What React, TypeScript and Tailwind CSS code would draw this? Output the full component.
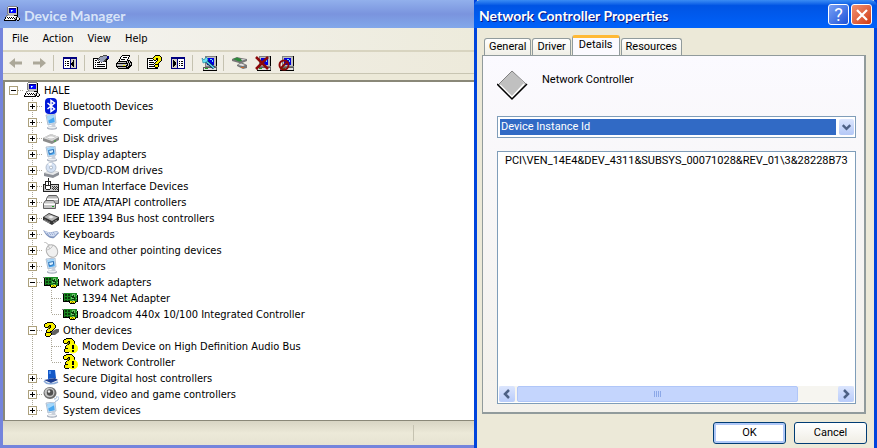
import { useState, type ReactNode } from "react";

const PALETTE: Record<string, string> = {
  k: "#000000",
  w: "#ffffff",
  g: "#c0c0c0",
  d: "#808080",
  b: "#0000ff",
  n: "#000080",
  c: "#66ddff",
  y: "#f8f000",
  o: "#808000",
  e: "#4a4a4a",
  s: "#98a0b8",
  D: "#0a3a0a",
  G: "#1c8a24",
  L: "#68c468",
};

// Small bitmap icons: one letter per pixel, "." is transparent
function Pixels({ rows }: { rows: string[] }) {
  return (
    <g shapeRendering="crispEdges">
      {rows.flatMap((row, y) =>
        [...row].map((ch, x) =>
          PALETTE[ch] ? (
            <rect key={`${x}-${y}`} x={x} y={y} width="1" height="1" fill={PALETTE[ch]} />
          ) : null
        )
      )}
    </g>
  );
}

const PC = [
  "....ddddddddd...",
  "...dwwwwwwwwgk..",
  "...dgnnnnnnngk..",
  "...dgnbbbbbbgk..",
  "...dgnbwcbbbgk..",
  "...dgnbcbbbbgk..",
  "...dgnbbbbbbgk..",
  "...dgggggggggk..",
  "....dggggggggk..",
  "..ddggggggkkkk..",
  "..dwwwwwwwwwgk..",
  ".kwkwkwkwkwgkgd.",
  ".kwwkwkwkwkgkwwk",
  "kwwwwwwwwwgkkwgk",
  "kkkkkkkkkkkk.kk.",
];

const PROPS = [
  "..........eeee..",
  ".......eeessssnn",
  "......esssssssnn",
  "kkkkkesssssssenn",
  "kwwwesesssssekk.",
  "kwkkwewsssseek..",
  "kwwwwwessseekk..",
  "kwkwkkkwewwwwk..",
  "kwwwwwwwwwwwwk..",
  "kwkwkkkkkkkkwk..",
  "kwwwwwwwwwwwwk..",
  "kwkwkkkkkkkkwk..",
  "kwwwwwwwwwwwwk..",
  "kkkkkkkkkkkkkk..",
];

const PRINTER = [
  "......kkkkkkkk..",
  ".....kwwwwwwwk..",
  "....kwwkkkkwk...",
  "....kwwwwwwwk...",
  "...kwkkkkwwk....",
  "...kwwwwwwwkkk..",
  "..kkkkkkkkkgkgk.",
  ".kggggggggkgkgkk",
  "kkkkkkkkkkkkgkgk",
  "kggggggggggkgkgk",
  "kggggggyygkkgkkk",
  "kkkkkkkkkkkgkkk.",
  ".kggggggggkkkk..",
  "..kkkkkkkkkkk...",
];

const HELP_DOC = [
  "........kkkkk...",
  ".......kyyyyyk..",
  "......kyyyyyyyk.",
  "kkkkkkyyykkyyyk.",
  "kwwwwwkyykkyyyk.",
  "kwkkkkwkkwkyyyk.",
  "kwwwwwwwwkyyyk..",
  "kwkkkkkwkyyyk...",
  "kwwwwwwkyyyk....",
  "kwkkkkkwkkkk....",
  "kwwwwwwkyyyk....",
  "kwkkkkkkyyyk....",
  "kwwwwwwwkkk.....",
  "kkkkkkkkkkk.....",
];

const CARD = [
  "................",
  "................",
  "................",
  "ddGGGGGGGGGGGGG.",
  ".kGDDGDDGGLLLGG.",
  ".kGDDGDDGGLDLGLk",
  ".kGGGGGGGDDDLGGk",
  ".kGDDGDDGLDDDGGk",
  ".kGDDGDDGLLLDGLk",
  ".kGGGGGGGGDDDGGk",
  ".kGDDGDDGGLLGGGk",
  ".kkkkkkkyyoyyDDk",
  ".......kyoyoyk..",
  "........kkkkk...",
];

const QUESTION = [
  "....kkkkkk......",
  "..kkyyyyyyk.....",
  ".kyyyyyyyyyk....",
  ".kyyyykkyyyyk...",
  ".kyyykokyyyyk...",
  "..kkkookyyyyk...",
  ".....okyyyyk....",
  "....kyyyyyk.....",
  "...kyyyyyk......",
  "...kyyykk.......",
  "...kkkkk........",
  "..kyyyyyk.......",
  "..kyyyyyk.......",
  "..kyyyyk........",
  "...kkkk.........",
];

const pcScreen = (
  <g shapeRendering="crispEdges">
    <path d="M4 1h11v10H4z" fill="#c0c0c0" stroke="#808080" />
    <path d="M6 3h7v7H6z" fill="#0000e0" />
    <path d="M9 4h2v1h1v2h-1V5H9z" fill="#66ddff" />
    <path d="M2 12h13v3H2z" fill="#e0e0e0" stroke="#606060" />
    <path d="M15 1h1v10h-1zM2 15h14v1H2z" fill="#000" />
    <path d="M4 13h3v1H4z" fill="#20a020" />
  </g>
);

const monitor = (
  <>
    <path d="M3 1l9-1 1 9-8 2z" fill="#dfe8f2" stroke="#9fb2c8" strokeWidth=".8" />
    <path d="M4.3 2l6.7-.8.8 7-6 1.4z" fill="#4aa8f0" />
    <path d="M4.3 2l6.7-.8.2 2-6.4 3.5z" fill="#a4d8fc" />
    <path d="M8 10l4-1 .5 3.5-3 1.2z" fill="#c8d0dc" />
    <ellipse cx="9" cy="14" rx="5" ry="1.7" fill="#a2abba" />
    <ellipse cx="9" cy="13.4" rx="4" ry="1" fill="#eef1f5" />
  </>
);

const ICONS: Record<string, ReactNode> = {
  pc: <Pixels rows={PC} />,
  bluetooth: (
    <>
      <rect x="2" y="0" width="12" height="16" rx="4" fill="#0018d8" />
      <path d="M4.5 5l7 6L8 13.5v-11L11.5 5l-7 6" fill="none" stroke="#fff" strokeWidth="1.5" />
    </>
  ),
  monitor,
  display: (
    <>
      {monitor}
      <path d="M5.5 4.5l5-1v3l-4 1.5z" fill="#d8f0ff" stroke="#2468b0" strokeWidth=".9" />
    </>
  ),
  disk: (
    <>
      <path d="M0 8l8-4 8 3v3l-7 4-9-3z" fill="#8b8b8b" />
      <path d="M0 8l8-4 8 3-7 4z" fill="#dedede" />
      <ellipse cx="8" cy="7.4" rx="4" ry="1.6" fill="#f8f8f8" stroke="#a8a8a8" strokeWidth=".6" />
      <path d="M11 11h2" stroke="#3a3" />
    </>
  ),
  cd: (
    <>
      <path d="M1 11l6-3 9 2v3l-6 3-9-2z" fill="#8c9098" />
      <path d="M1 11l6-3 9 2-6 3z" fill="#e6e8ea" />
      <circle cx="8" cy="5.5" r="5" fill="#d5e2f4" stroke="#9eabbd" strokeWidth=".7" />
      <path d="M8 5.5L5 1.8A5 5 0 0 1 9 .8z" fill="#fff" />
      <circle cx="8" cy="5.5" r="1.5" fill="#fff" stroke="#8292a8" strokeWidth=".6" />
    </>
  ),
  hid: (
    <g shapeRendering="crispEdges">
      <path d="M0 6h16v8H0z" fill="#222" />
      <path d="M1 7h14v6H1z" fill="#c8c8c8" />
      <path d="M9 8h1v1H9zM11 8h1v1h-1zM13 8h1v1h-1zM10 9h1v1h-1zM12 9h1v1h-1zM14 9h1v1h-1zM9 10h1v1H9zM11 10h1v1h-1zM13 10h1v1h-1zM10 11h1v1h-1zM12 11h1v1h-1zM14 11h1v1h-1z" fill="#333" />
      <path d="M2 3h6v8H7v1H3v-1H2z" fill="#222" />
      <path d="M3 4h2v3H3zM6 4h1v3H6zM3 8h4v3H3z" fill="#fff" />
      <path d="M5 0h1v3H5z" fill="#222" />
    </g>
  ),
  ide: (
    <>
      <path d="M3.500 4.500l2-3h8l2 3v5h-12z" fill="#b8b8b8" stroke="#606060" />
      <path d="M4 4.500h11v1.500H4z" fill="#fff" />
      <path d="M.5 9.500l2-3h8l2 3v5H.5z" fill="#c4c4c4" stroke="#606060" />
      <path d="M1 9.500h11V11H1z" fill="#fff" />
      <path d="M9 12.500h2" stroke="#20a020" />
    </>
  ),
  ieee: (
    <>
      <path d="M0 7l6-4 10 4v3l-7 5-9-5z" fill="#333" />
      <path d="M1 7l5-3 9 3.500-6 3.500z" fill="#b4b4b4" />
      <path d="M5 7l3-1.500 3 1.500-3 1.500z" fill="#eee" />
      <path d="M2 9.500v1.500M4 10.500V12M6 11.500V13M11 11.500V13M13 10v1.500" stroke="#ddd" strokeWidth=".8" />
    </>
  ),
  keyboard: (
    <>
      <path d="M0 4c3 2 7 3 14 1l2 2-5 5c-4 1-8-2-11-8z" fill="#7e93bd" />
      <path d="M1 4.500c3 2 7 2.500 13 1l1 1-4 4C7 11 4 9 1 4.500z" fill="#d4def2" />
      <path d="M4 7.500l8-1M5 9l7-1" stroke="#8fa4ce" strokeDasharray="1 1" />
    </>
  ),
  mouse: (
    <>
      <path d="M1 0c3 0 3 3 6 3" fill="none" stroke="#b8b8b8" />
      <ellipse cx="9" cy="9" rx="5.500" ry="6.500" transform="rotate(-25 9 9)" fill="#f0f0f0" stroke="#b0b0b0" />
      <path d="M4 8c3-1 5-2 6-5M7 7L5 3.500" fill="none" stroke="#b4b4b4" strokeWidth=".8" />
    </>
  ),
  card: <Pixels rows={CARD} />,
  question: (
    <>
      <path d="M8 10l5-3h3v3l-4 3H8z" fill="#606060" />
      <Pixels rows={QUESTION} />
    </>
  ),
  warning: (
    <>
      <Pixels rows={QUESTION} />
      <circle cx="11" cy="10.500" r="5" fill="#ffff00" />
      <path d="M10 7h2v4h-2zM10 12h2v2h-2z" fill="#000" />
    </>
  ),
  sd: (
    <>
      <path d="M5 0h7l1 8-8 1z" fill="#1458c8" />
      <path d="M6 1h2v3H6z" fill="#4c90f0" />
      <path d="M1 10l11-2 3 2-7 3z" fill="#1c3c90" />
      <path d="M1 11c2 3 8 4 14 1" fill="none" stroke="#88a8d8" strokeWidth="1.500" />
    </>
  ),
  sound: (
    <>
      <ellipse cx="7" cy="7" rx="6.500" ry="6" fill="#6a6a6a" />
      <ellipse cx="6.500" cy="6.500" rx="5" ry="4.800" fill="#c4c4c4" />
      <circle cx="7" cy="6.500" r="3.200" fill="#505050" />
      <circle cx="6" cy="5.500" r="1.200" fill="#eee" />
      <path d="M11 13c2 0 3-1 3-3M12 15.500c3-1 4-2 4-5" fill="none" stroke="#9ab6da" />
    </>
  ),
  back: <path d="M1 8l6-5v3.500h7v3H7V13z" fill="#aca899" />,
  forward: <path d="M15 8L9 3v3.500H2v3h7V13z" fill="#aca899" />,
  treePane: (
    <g shapeRendering="crispEdges">
      <path d="M1 2h14v12H1z" fill="#000080" />
      <path d="M2 4h6v9H2z" fill="#fff" />
      <path d="M9 4h5v9H9z" fill="#d4d0c8" />
      <path d="M3 6h1v1H3zM5 6h2v1H5zM3 8h1v1H3zM5 8h2v1H5zM3 10h1v1H3zM5 10h2v1H5zM12 5v7h-1v-1h-1v-1H9V8h1V7h1V5z" fill="#000" />
    </g>
  ),
  actionPane: (
    <g shapeRendering="crispEdges">
      <path d="M1 2h14v12H1z" fill="#000080" />
      <path d="M2 4h5v9H2z" fill="#d4d0c8" />
      <path d="M8 4h6v9H8z" fill="#fff" />
      <path d="M9 6h1v1H9zM11 6h2v1h-2zM9 8h1v1H9zM11 8h2v1h-2zM9 10h1v1H9zM11 10h2v1h-2zM3 5h1v1h1v1h1v3H5v1H4v1H3z" fill="#000" />
    </g>
  ),
  props: <Pixels rows={PROPS} />,
  printer: <Pixels rows={PRINTER} />,
  helpDoc: <Pixels rows={HELP_DOC} />,
  scan: (
    <>
      {pcScreen}
      <path d="M5 6l8 7" stroke="#0c3060" strokeWidth="3" />
      <path d="M5 6l8 7" stroke="#66e0f0" strokeWidth="1.200" />
      <path d="M1 3l2 2 2-3 2 2-1 3-4 1z" fill="#66e0f0" stroke="#1a7a98" strokeWidth=".6" />
    </>
  ),
  update: (
    <>
      <path d="M0 4l5-2 4 1 6 1v2l-5 2-3 0-7-2z" fill="#777" />
      <path d="M1 4l4-1.500 4 1.500 1 2-3 .5z" fill="#2e8a3a" />
      <path d="M9 4l5 .5-4 1z" fill="#ddd" />
      <path d="M5 10l4-3 6 3v3l-4 1-6-3z" fill="#777" />
      <path d="M6 10l3-1.500 4 1.500-2 1z" fill="#e4e4e4" />
      <path d="M9 12.500h3" stroke="#c66a30" />
    </>
  ),
  uninstall: (
    <>
      {pcScreen}
      <path d="M1 2l12 12M13 2L1 14" stroke="#8c0808" strokeWidth="2.500" />
    </>
  ),
  disable: (
    <>
      {pcScreen}
      <circle cx="6" cy="10" r="4.500" fill="none" stroke="#8c0808" strokeWidth="2" />
      <path d="M3 13l6-6" stroke="#8c0808" strokeWidth="2" />
    </>
  ),
};

function Icon({ name }: { name: string }) {
  return (
    <svg viewBox="0 0 16 16" className="size-4 shrink-0" aria-hidden="true">
      {ICONS[name]}
    </svg>
  );
}

type Device = {
  label: string;
  icon: string;
  children?: string[];
};

const DEVICES: Device[] = [
  { label: "Bluetooth Devices", icon: "bluetooth" },
  { label: "Computer", icon: "monitor" },
  { label: "Disk drives", icon: "disk" },
  { label: "Display adapters", icon: "display" },
  { label: "DVD/CD-ROM drives", icon: "cd" },
  { label: "Human Interface Devices", icon: "hid" },
  { label: "IDE ATA/ATAPI controllers", icon: "ide" },
  { label: "IEEE 1394 Bus host controllers", icon: "ieee" },
  { label: "Keyboards", icon: "keyboard" },
  { label: "Mice and other pointing devices", icon: "mouse" },
  { label: "Monitors", icon: "display" },
  {
    label: "Network adapters",
    icon: "card",
    children: ["1394 Net Adapter", "Broadcom 440x 10/100 Integrated Controller"],
  },
  {
    label: "Other devices",
    icon: "question",
    children: ["Modem Device on High Definition Audio Bus", "Network Controller"],
  },
  { label: "Secure Digital host controllers", icon: "sd" },
  { label: "Sound, video and game controllers", icon: "sound" },
  { label: "System devices", icon: "monitor" },
];

// One 19px indent column of the tree with its dotted connector lines
function Lines({ line, box }: { line: "none" | "pass" | "tee" | "end" | "root"; box?: "plus" | "minus" }) {
  return (
    <svg viewBox="0 0 19 16" className="h-4 w-[19px] shrink-0" shapeRendering="crispEdges" aria-hidden="true">
      <g stroke="#aca899" strokeDasharray="1 1" fill="none">
        {(line === "pass" || line === "tee") && <path d="M8.500 0v16" />}
        {line === "end" && <path d="M8.500 0v8" />}
        {(line === "tee" || line === "end" || line === "root") && <path d="M9 8.500h10" />}
      </g>
      {box && (
        <>
          <rect x="4.500" y="4.500" width="8" height="8" fill="#fff" stroke="#aca07c" />
          <path d={box === "plus" ? "M6 8h5v1H6zM8 6h1v5H8z" : "M6 8h5v1H6z"} fill="#000" />
        </>
      )}
    </svg>
  );
}

function Toggle({ label, open, root, onClick }: { label: string; open: boolean; root?: boolean; onClick: () => void }) {
  return (
    <button type="button" aria-label={`${open ? "Collapse" : "Expand"} ${label}`} onClick={onClick}>
      <Lines line={root ? "root" : "tee"} box={open ? "minus" : "plus"} />
    </button>
  );
}

function DeviceTree() {
  // leaf categories start closed
  const [open, setOpen] = useState<string[]>(["HALE", "Network adapters", "Other devices"]);

  const toggle = (label: string) =>
    setOpen((o) => (o.includes(label) ? o.filter((l) => l !== label) : [...o, label]));

  return (
    <div className="flex-1 overflow-hidden whitespace-nowrap border-l-2 border-t-2 border-[#8a8878] bg-white pb-0.5 leading-[18px]">
      <div className="flex h-4">
        <Toggle label="HALE" root open={open.includes("HALE")} onClick={() => toggle("HALE")} />
        <Icon name="pc" />
        <span className="pl-1">HALE</span>
      </div>
      {open.includes("HALE") && (
        <ul>
          {DEVICES.map((d) => (
            <li key={d.label}>
              <div className="flex h-4">
                <Lines line="none" />
                <Toggle label={d.label} open={open.includes(d.label)} onClick={() => toggle(d.label)} />
                <Icon name={d.icon} />
                <span className="pl-1">{d.label}</span>
              </div>
              {d.children && open.includes(d.label) && (
                <ul>
                  {d.children.map((c, i) => (
                    <li key={c} className="flex h-4">
                      <Lines line="none" />
                      <Lines line="pass" />
                      <Lines line={i === d.children!.length - 1 ? "end" : "tee"} />
                      <Icon name={d.icon === "question" ? "warning" : d.icon} />
                      <span className="pl-1">{c}</span>
                    </li>
                  ))}
                </ul>
              )}
            </li>
          ))}
        </ul>
      )}
    </div>
  );
}

const TOOLS: [string, string][][] = [
  [["back", "Back"], ["forward", "Forward"]],
  [["treePane", "Show/Hide Console Tree"]],
  [["props", "Properties"], ["printer", "Print"]],
  [["helpDoc", "Help"], ["actionPane", "Show/Hide Action Pane"]],
  [["scan", "Scan for hardware changes"]],
  [["update", "Update Driver"], ["uninstall", "Uninstall"], ["disable", "Disable"]],
];

function DeviceManager() {
  return (
    <section className="flex min-w-0 flex-1 flex-col border-b-[3px] border-l-[3px] border-[#7484dc] bg-[#ece9d8] font-['DejaVu_Sans_Condensed','Noto_Sans',sans-serif] text-[11px]">
      <header className="-ml-[3px] flex h-7 items-center gap-1 bg-linear-to-b from-[#92b0ec] via-[#7a94de] to-[#82a8ea] pl-1">
        <Icon name="pc" />
        <h1 className="pt-1 font-['Lato','Open_Sans',sans-serif] text-[14px] font-bold leading-5 text-[#d8e4f8]">
          Device Manager
        </h1>
      </header>
      <nav className="flex h-6 items-center border-b-2 border-[#d8d4c0] bg-linear-to-r from-[#f5f4f2] to-[#edebdc] pl-0.5">
        {["File", "Action", "View", "Help"].map((m) => (
          <button key={m} type="button" className="px-[7px] pt-px">
            {m}
          </button>
        ))}
      </nav>
      <div className="flex h-[22px] items-center border-b border-[#c8c5b2] bg-linear-to-r from-[#f3f1ec] to-[#edeadb] pl-px">
        {TOOLS.map((group, i) => (
          <div key={i} className="flex items-center">
            {i > 0 && <span className="mx-[3px] h-4 w-0.5 border-l border-[#c5c2b0]" />}
            {group.map(([icon, label]) => (
              <button key={icon} type="button" aria-label={label} className="flex w-[23px] justify-center">
                <Icon name={icon} />
              </button>
            ))}
          </div>
        ))}
      </div>
      <div className="h-1.5" />
      <DeviceTree />
      <footer className="flex h-[25px] border-t border-[#8a8878] bg-linear-to-b from-[#d8d5c4] via-[#ece9d8] to-[#e6e3d2] py-1">
        <span className="flex-1 border-r border-[#c5c2b0]" />
        <span className="w-[60px]" />
      </footer>
    </section>
  );
}

function Chevron({ d }: { d: string }) {
  return (
    <svg viewBox="0 0 16 16" className="size-4" aria-hidden="true">
      <path d={d} fill="none" stroke="#4d6185" strokeWidth="2.500" />
    </svg>
  );
}

const TABS = ["General", "Driver", "Details", "Resources"];

function PropertiesDialog() {
  const [tab, setTab] = useState("Details");

  return (
    <section
      role="dialog"
      aria-labelledby="dialog-title"
      className="flex w-[403px] shrink-0 flex-col border-x-[3px] border-[#0044dc] bg-[#ece9d8] font-['Roboto','Liberation_Sans',sans-serif] text-[11px]"
    >
      <header className="-mx-[3px] flex h-7 items-center gap-0.5 rounded-t-md bg-linear-to-b from-[#3a8cf4] via-[#0054e4] via-20% to-[#0062fa] px-[5px]">
        <h2
          id="dialog-title"
          className="flex-1 pt-1 font-['Lato','Open_Sans',sans-serif] text-[14px] font-bold leading-5 text-white [text-shadow:1px_1px_#0a1883]"
        >
          Network Controller Properties
        </h2>
        <button
          type="button"
          aria-label="Help"
          className="mt-px size-[21px] rounded-[3px] border border-white bg-linear-to-br from-[#7aa0f4] to-[#1c50d8] text-[18px] leading-[19px] text-white"
        >
          ?
        </button>
        <button
          type="button"
          aria-label="Close"
          className="mt-px flex size-[21px] items-center justify-center rounded-[3px] border border-white bg-linear-to-br from-[#f09070] to-[#d03808]"
        >
          <svg viewBox="0 0 16 16" className="size-4" aria-hidden="true">
            <path d="M3 3l10 10M13 3L3 13" stroke="#fff" strokeWidth="2.200" />
          </svg>
        </button>
      </header>

      <div className="flex flex-1 flex-col pb-1 pl-[5px] pr-2 pt-[7px]">
        <div role="tablist" className="flex h-5 items-end gap-px pl-0.5">
          {TABS.map((t) => (
            <button
              key={t}
              type="button"
              role="tab"
              aria-selected={t === tab}
              onClick={() => setTab(t)}
              className={
                t === tab
                  ? "-mb-px h-[21px] rounded-t-[3px] border-x border-t-[3px] border-x-[#919b9c] border-t-[#ffb934] bg-[#fbfaff] px-1.5 pb-1 leading-3"
                  : "h-[17px] rounded-t-[3px] border border-b-0 border-[#919b9c] bg-linear-to-b from-white to-[#f0efe6] px-1 leading-4"
              }
            >
              {t}
            </button>
          ))}
        </div>

        <div
          role="tabpanel"
          className="flex flex-1 flex-col border border-b-2 border-r-2 border-[#919b9c] bg-linear-to-b from-[#fbfaff] to-[#f3f1eb] px-[14px] pb-2 pr-2"
        >
          <div className="flex h-[60px] pt-[14px]">
            <svg viewBox="0 0 32 32" className="size-8" aria-hidden="true">
              <path d="M1 15L15 1l14 14-14 14z" fill="#c0c0c0" />
              <path d="M1 15L15 1l14 13" fill="none" stroke="#808080" />
              <path d="M3 15l12 12 12-13" fill="none" stroke="#fff" strokeWidth="1.500" />
              <path d="M0 14l15 15 15-15" fill="none" stroke="#000" strokeWidth="1.500" />
            </svg>
            <span className="pl-[13px] leading-5">Network Controller</span>
          </div>

          <div className="flex h-[22px] shrink-0 items-center border border-[#7f9db9] bg-white py-0.5 pl-0.5 pr-px">
            <select
              aria-label="Property"
              className="h-4 flex-1 appearance-none bg-[#316ac5] pl-px text-[11px] leading-4 text-white"
            >
              <option>Device Instance Id</option>
            </select>
            <span className="ml-[3px] flex h-4 w-[15px] items-center justify-center rounded-xs bg-linear-to-b from-[#dbe5fd] to-[#b4c8f6]">
              <Chevron d="M4 6l4 4 4-4" />
            </span>
          </div>

          <div className="mt-[13px] flex flex-1 flex-col border border-[#7f9db9] bg-white p-px">
            <textarea
              readOnly
              wrap="off"
              aria-label="Value"
              rows={1}
              className="w-full flex-1 resize-none overflow-hidden pl-1.5 leading-4"
              defaultValue={"PCI\\VEN_14E4&DEV_4311&SUBSYS_00071028&REV_01\\3&28228B73"}
            />
            <div className="flex h-4 bg-[#f6f5f0]">
              <button type="button" aria-label="Scroll left" className="rounded-xs bg-linear-to-b from-[#dbe5fd] to-[#b9ccfa]">
                <Chevron d="M10 4L6 8l4 4" />
              </button>
              <div className="mx-0.5 flex w-[281px] items-center justify-center gap-px rounded-xs border border-[#b0c6f8] bg-[#c4d5fd]">
                {[0, 1, 2, 3].map((n) => (
                  <span key={n} className="h-1.5 w-px bg-[#8ca8e8]" />
                ))}
              </div>
              <button type="button" aria-label="Scroll right" className="ml-auto rounded-xs bg-linear-to-b from-[#dbe5fd] to-[#b9ccfa]">
                <Chevron d="M6 4l4 4-4 4" />
              </button>
            </div>
          </div>
        </div>

        <div className="-mr-px flex justify-end gap-2 pt-2">
          <button
            type="button"
            className="h-[22px] w-[73px] rounded-[3px] border border-[#003c74] bg-white shadow-[inset_0_0_0_2px_#b0c8f8]"
          >
            OK
          </button>
          <button
            type="button"
            className="h-[22px] w-[73px] rounded-[3px] border border-[#003c74] bg-linear-to-b from-white to-[#efede4]"
          >
            Cancel
          </button>
        </div>
      </div>
    </section>
  );
}

export default function App() {
  return (
    <main className="flex min-h-screen bg-[#7484dc] text-black">
      <DeviceManager />
      <PropertiesDialog />
    </main>
  );
}
